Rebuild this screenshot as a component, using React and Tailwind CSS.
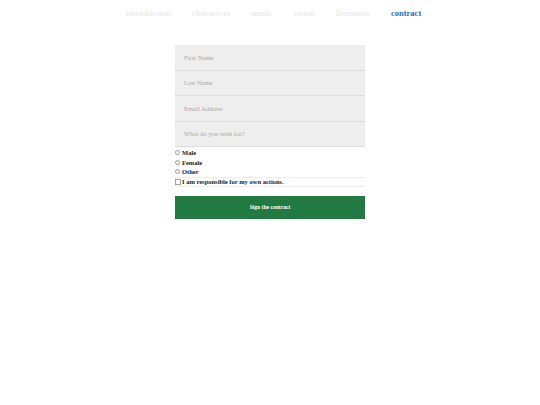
import { useState } from 'react';

const NAV = ['introduction', 'characters', 'music', 'visual', 'literature', 'contract'];

export default function App() {
  const [gender, setGender] = useState('');
  const [agree, setAgree] = useState(false);

  return (
    <div className="min-h-screen bg-white font-['Liberation_Serif',serif]">
      {/* Nav */}
      <nav className="flex justify-center gap-[21px] pt-[8px] pl-[7px] text-[8.5px] font-bold leading-[10px]">
        {NAV.map((n) => (
          <a key={n} className={n === 'contract' ? 'text-[#2b6cb0]' : 'text-[#ececec]'}>
            {n}
          </a>
        ))}
      </nav>

      {/* Form */}
      <form className="mx-auto mt-[27px] w-[190px]" onSubmit={(e) => e.preventDefault()}>
        {['First Name', 'Last Name', 'Email Address', 'What do you wish for?'].map((p) => (
          <input
            key={p}
            placeholder={p}
            className="block h-[25.5px] w-full border-b border-[#dddddd] bg-[#eeeeee] px-[9px] text-[6.6px] text-[#555] placeholder-[#a8a8a8] outline-none"
          />
        ))}

        <div className="mt-[1px] flex flex-col text-[6.5px] font-bold text-[#222] leading-[9.5px]">
          {['Male', 'Female', 'Other'].map((g) => (
            <label key={g} className="flex h-[9.5px] items-center gap-[2px]">
              <input
                type="radio"
                name="gender"
                checked={gender === g}
                onChange={() => setGender(g)}
                className="m-0 h-[5px] w-[5px] appearance-none rounded-full border border-[#9a9a9a] bg-white checked:bg-[#2b6cb0]"
              />
              {g}
            </label>
          ))}
        </div>

        <label className="flex h-[10px] items-center gap-[1px] border-y border-[#eeeeee] text-[6.5px] font-bold text-[#222]">
          <input
            type="checkbox"
            checked={agree}
            onChange={(e) => setAgree(e.target.checked)}
            className="m-0 h-[6px] w-[6px] appearance-none border border-[#a0a0a0] bg-white checked:bg-[#2b6cb0]"
          />
          I am responsible for my own actions.
        </label>

        <button
          type="submit"
          className="mt-[9px] block h-[23px] w-full bg-[#217a41] text-[5.6px] font-bold text-white"
        >
          Sign the contract
        </button>
      </form>
    </div>
  );
}
